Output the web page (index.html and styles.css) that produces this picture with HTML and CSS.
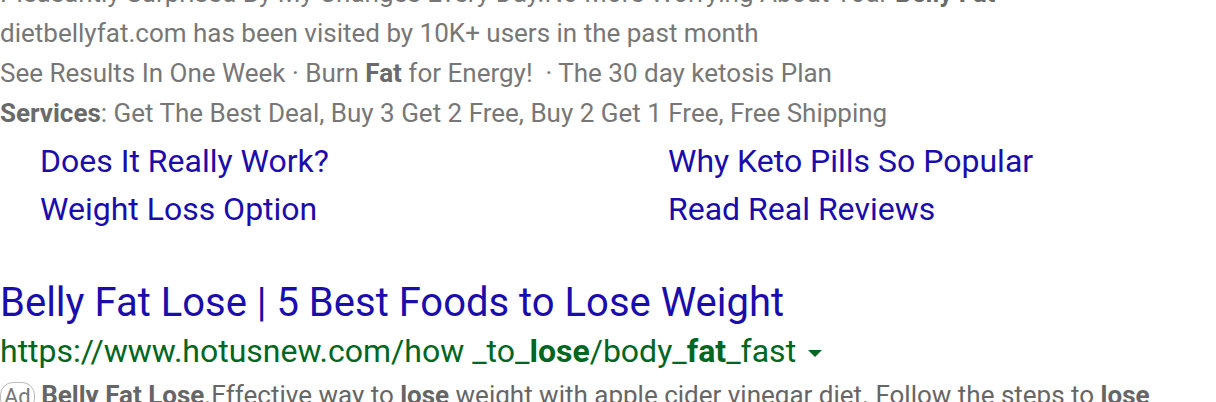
FILE: index.html
```html
<!DOCTYPE html>
<html>
<head>
<meta charset="utf-8">
<link rel="stylesheet" href="styles.css">
</head>
<body>
<div class="page">
  <div class="ad-info">
    <div class="gray-line">Pleasantly Surprised By My Changes Every Day.No More Worrying About Your <b>Belly Fat</b></div>
    <div class="gray-line">dietbellyfat.com has been visited by 10K+ users in the past month</div>
    <div class="gray-line">See Results In One Week · Burn <b>Fat</b> for Energy! &nbsp;· The 30 day ketosis Plan</div>
    <div class="gray-line"><b>Services</b>: Get The Best Deal, Buy 3 Get 2 Free, Buy 2 Get 1 Free, Free Shipping</div>
  </div>
  <div class="sitelinks">
    <a class="sitelink" href="#">Does It Really Work?</a>
    <a class="sitelink" href="#">Why Keto Pills So Popular</a>
    <a class="sitelink" href="#">Weight Loss Option</a>
    <a class="sitelink" href="#">Read Real Reviews</a>
  </div>
  <div class="result">
    <a class="title" href="#">Belly Fat Lose | 5 Best Foods to Lose Weight</a>
    <div class="url">https://www.hotusnew.com/how _to_<b>lose</b>/body_<b>fat</b>_fast<span class="caret"></span></div>
    <div class="desc"><span class="ad-badge">Ad</span> <b>Belly Fat Lose</b>.Effective way to <b>lose</b> weight with apple cider vinegar diet. Follow the steps to <b>lose</b> belly fat fast</div>
  </div>
</div>
</body>
</html>
```

FILE: styles.css
```css
html, body {
  margin: 0;
  padding: 0;
  background: #fff;
}
body {
  font-family: Roboto, "Noto Sans", sans-serif;
  overflow: hidden;
  height: 402px;
}
.page {
  margin-top: -27px;
}
.gray-line {
  font-size: 26px;
  line-height: 40px;
  color: #777;
  white-space: nowrap;
}
.gray-line b {
  font-weight: 700;
  color: #6a6a6a;
}
.sitelinks {
  display: grid;
  grid-template-columns: 628px 1fr;
  padding-left: 40px;
  margin-top: 4px;
}
.sitelink {
  font-size: 32px;
  line-height: 48px;
  color: #1a0dab;
  text-decoration: none;
  white-space: nowrap;
}
.result {
  margin-top: 46px;
}
.title {
  display: block;
  font-size: 40px;
  line-height: 48px;
  color: #1a0dab;
  text-decoration: none;
  white-space: nowrap;
}
.url {
  font-size: 32px;
  line-height: 48px;
  color: #006621;
  white-space: nowrap;
}
.url b {
  font-weight: 700;
}
.caret {
  display: inline-block;
  width: 0;
  height: 0;
  margin-left: 12px;
  vertical-align: middle;
  border-left: 7px solid transparent;
  border-right: 7px solid transparent;
  border-top: 7px solid #006621;
}
.desc {
  max-width: 1170px;
  font-size: 26px;
  line-height: 40px;
  color: #666;
}
.desc b {
  font-weight: 700;
}
.ad-badge {
  display: inline-block;
  border: 1px solid #bbb;
  border-radius: 13px;
  padding: 0 3px;
  font-size: 22px;
  line-height: 28px;
  color: #777;
}
```
